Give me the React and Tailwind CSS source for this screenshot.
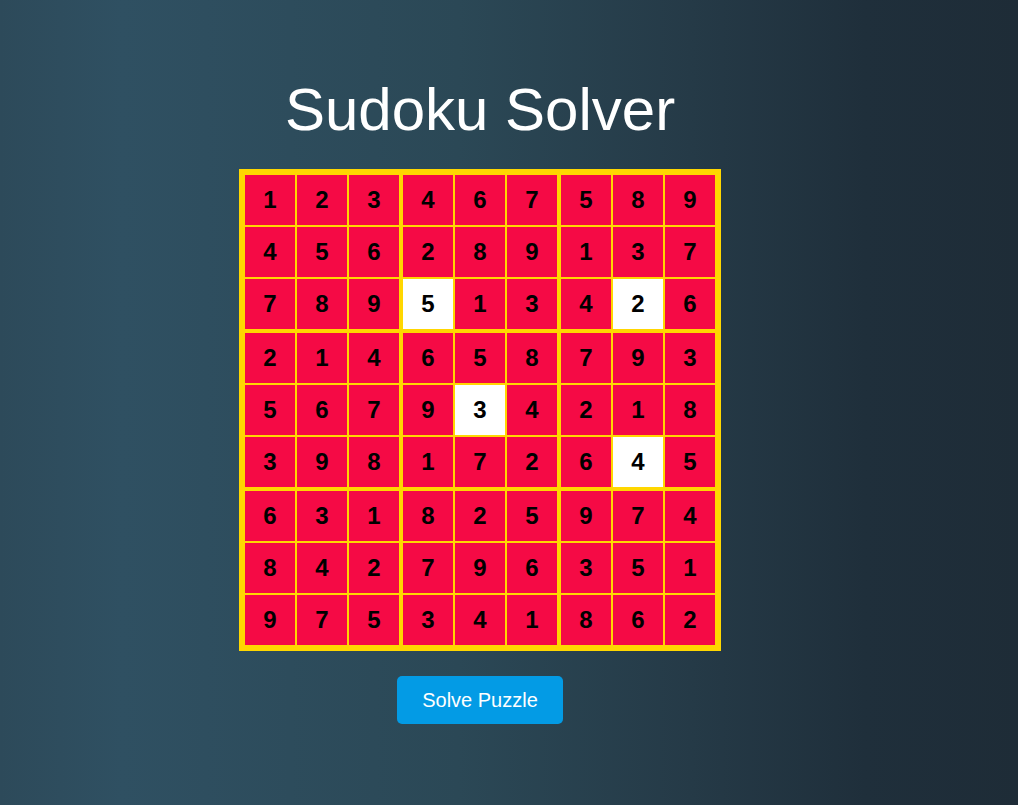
import { useState } from "react"

const board = [
  [1, 2, 3, 4, 6, 7, 5, 8, 9],
  [4, 5, 6, 2, 8, 9, 1, 3, 7],
  [7, 8, 9, 5, 1, 3, 4, 2, 6],
  [2, 1, 4, 6, 5, 8, 7, 9, 3],
  [5, 6, 7, 9, 3, 4, 2, 1, 8],
  [3, 9, 8, 1, 7, 2, 6, 4, 5],
  [6, 3, 1, 8, 2, 5, 9, 7, 4],
  [8, 4, 2, 7, 9, 6, 3, 5, 1],
  [9, 7, 5, 3, 4, 1, 8, 6, 2],
]

// cells the user typed in (shown white)
const given = ["2-3", "2-7", "4-4", "5-7"]

export default function App() {
  const [grid] = useState(board)

  return (
    <div className="min-h-screen w-full bg-[linear-gradient(to_right,#2d4a5a_0%,#2f5062_12%,#2b4856_45%,#253a47_68%,#1f2f3b_85%,#1e2c37_100%)] font-['Liberation_Sans',Arial,sans-serif]">
      <div className="w-[960px] flex flex-col items-center pt-[75px]">
        <h1 className="text-[60px] leading-[70px] text-white font-normal">Sudoku Solver</h1>

        {/* Board */}
        <div className="mt-[24px] bg-[#ffd700] p-[6px] grid grid-cols-3 gap-[4px]">
          {[0, 1, 2, 3, 4, 5, 6, 7, 8].map((b) => (
            <div key={b} className="grid grid-cols-3 gap-[2px]">
              {[0, 1, 2, 3, 4, 5, 6, 7, 8].map((c) => {
                const r = Math.floor(b / 3) * 3 + Math.floor(c / 3)
                const col = (b % 3) * 3 + (c % 3)
                const isGiven = given.includes(`${r}-${col}`)
                return (
                  <div
                    key={c}
                    className={`w-[50px] h-[50px] flex items-center justify-center text-[24px] font-bold text-black ${
                      isGiven ? "bg-white" : "bg-[#f50a45]"
                    }`}
                  >
                    {grid[r][col]}
                  </div>
                )
              })}
            </div>
          ))}
        </div>

        <button className="mt-[25px] bg-[#039be5] text-white text-[20px] leading-[24px] px-[25px] py-[12px] rounded-[5px]">
          Solve Puzzle
        </button>
      </div>
    </div>
  )
}
